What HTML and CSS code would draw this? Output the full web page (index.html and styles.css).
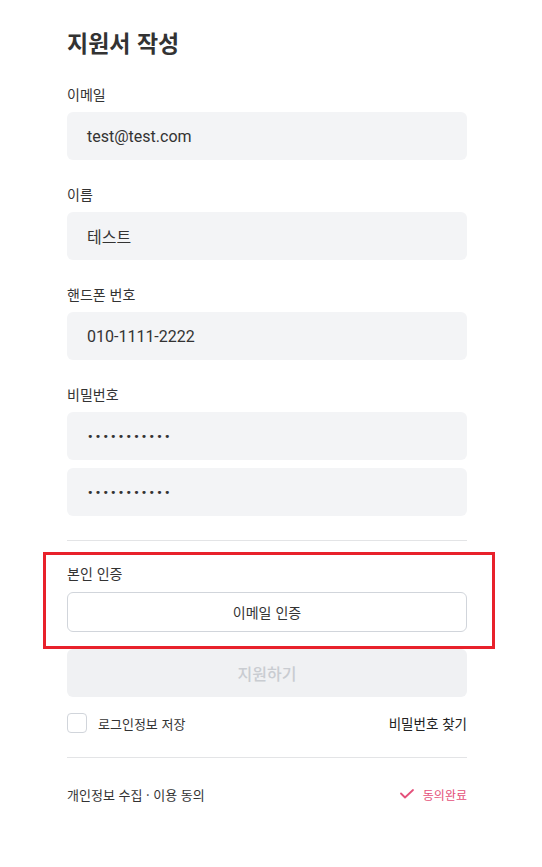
FILE: index.html
```html
<!DOCTYPE html>
<html lang="ko">
<head>
<meta charset="utf-8">
<link rel="stylesheet" href="styles.css">
</head>
<body>
<main class="page">
  <h1 class="title">지원서 작성</h1>
  <form class="form">
    <div class="field">
      <label class="label">이메일</label>
      <div class="input">test@test.com</div>
    </div>
    <div class="field">
      <label class="label">이름</label>
      <div class="input">테스트</div>
    </div>
    <div class="field">
      <label class="label">핸드폰 번호</label>
      <div class="input">010-1111-2222</div>
    </div>
    <div class="field">
      <label class="label">비밀번호</label>
      <div class="input pw">•••••••••••</div>
      <div class="input pw">•••••••••••</div>
    </div>
    <hr class="divider">
    <div class="verify">
      <div class="highlight"></div>
      <label class="label">본인 인증</label>
      <button type="button" class="btn-outline">이메일 인증</button>
    </div>
    <button type="button" class="btn-submit">지원하기</button>
    <div class="row">
      <label class="check">
        <span class="box"></span>
        <span>로그인정보 저장</span>
      </label>
      <a class="link">비밀번호 찾기</a>
    </div>
    <hr class="divider second">
    <div class="agree">
      <span>개인정보 수집 · 이용 동의</span>
      <span class="done">
        <svg width="14" height="10" viewBox="0 0 14 10" fill="none"><path d="M1 4.5 L5 8.5 L13 1" stroke="#e4507a" stroke-width="1.8" stroke-linecap="round" stroke-linejoin="round"/></svg>
        동의완료
      </span>
    </div>
  </form>
</main>
</body>
</html>
```
FILE: styles.css
```css
* { box-sizing: border-box; }
body {
  margin: 0;
  background: #fff;
  font-family: "Roboto", "Noto Sans CJK KR", sans-serif;
  color: #333;
}
.page {
  width: 400px;
  margin-left: 67px;
  padding-top: 24px;
}
.title {
  margin: 0;
  font-size: 23px;
  line-height: 36px;
  font-weight: 700;
  color: #333;
  font-family: "Noto Sans CJK KR", sans-serif;
}
.form {
  display: flex;
  flex-direction: column;
  margin-top: 24px;
}
.field {
  display: flex;
  flex-direction: column;
  gap: 8px;
  margin-bottom: 24px;
}
.label {
  font-size: 14px;
  line-height: 20px;
  color: #333;
  font-family: "Noto Sans CJK KR", sans-serif;
}
.input {
  height: 48px;
  border-radius: 6px;
  background: #f3f4f6;
  padding: 0 20px;
  display: flex;
  align-items: center;
  font-size: 16px;
  color: #333;
}
.pw {
  font-size: 11px;
  letter-spacing: 1.2px;
  font-family: "DejaVu Sans", sans-serif;
  padding-left: 20px;
  color: #333;
}
.divider {
  border: 0;
  height: 1px;
  background: #e3e4e6;
  margin: 0;
}
.verify {
  position: relative;
  display: flex;
  flex-direction: column;
  gap: 9px;
  padding-top: 22px;
}
.highlight {
  position: absolute;
  left: -24px;
  right: -28px;
  top: 11px;
  bottom: -17px;
  border: 3px solid #e8212b;
  pointer-events: none;
}
.btn-outline {
  height: 40px;
  border: 1px solid #d1d5db;
  border-radius: 6px;
  background: #fff;
  font-family: "Noto Sans CJK KR", sans-serif;
  font-size: 14px;
  color: #333;
}
.btn-submit {
  margin-top: 17px;
  height: 48px;
  border: 0;
  border-radius: 6px;
  background: #f0f1f3;
  font-family: "Noto Sans CJK KR", sans-serif;
  font-size: 16px;
  font-weight: 500;
  color: #c9ccd1;
}
.row {
  display: flex;
  justify-content: space-between;
  align-items: center;
  margin-top: 16px;
  height: 20px;
  font-family: "Noto Sans CJK KR", sans-serif;
  font-size: 13px;
}
.check {
  display: flex;
  align-items: center;
  gap: 11px;
  color: #333;
}
.box {
  width: 20px;
  height: 20px;
  border: 1px solid #d1d5db;
  border-radius: 4px;
  background: #fff;
}
.link {
  color: #222;
  font-size: 13.5px;
}
.divider.second {
  margin-top: 24px;
}
.agree {
  display: flex;
  justify-content: space-between;
  align-items: center;
  height: 72px;
  font-family: "Noto Sans CJK KR", sans-serif;
  font-size: 13px;
  color: #333;
}
.done {
  display: flex;
  align-items: center;
  gap: 9px;
  font-size: 12px;
  color: #e4507a;
}
```
